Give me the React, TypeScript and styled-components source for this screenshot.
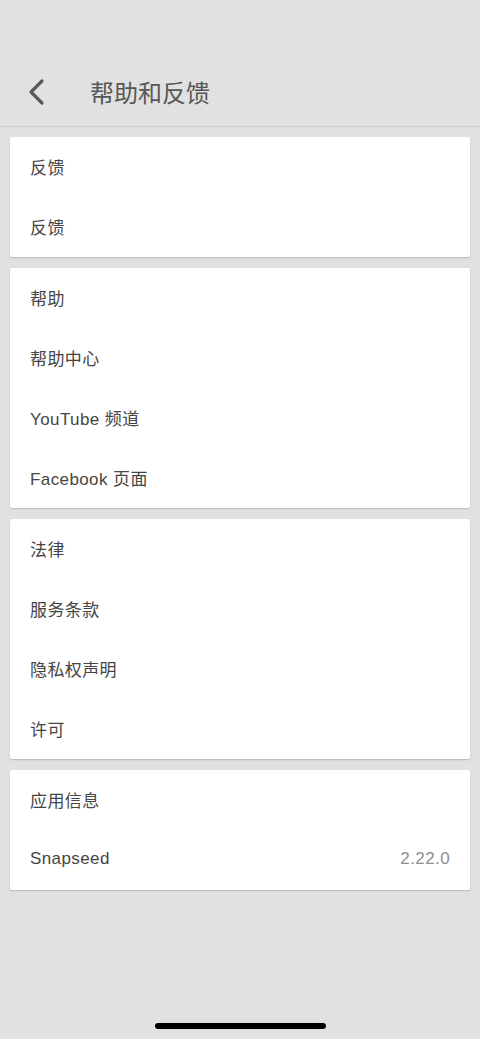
import React from "react";
import styled, { createGlobalStyle } from "styled-components";

const Global = createGlobalStyle`
  html, body { margin: 0; padding: 0; background: #e1e1e1; }
  body { font-family: "Liberation Sans", "Noto Sans CJK SC", sans-serif; }
`;

const Page = styled.div`
  width: 480px;
  height: 1039px;
  background: #e1e1e1;
  display: flex;
  flex-direction: column;
  position: relative;
  overflow: hidden;
`;

const Header = styled.header`
  height: 127px;
  box-sizing: border-box;
  border-bottom: 1px solid #cdcdcd;
  display: flex;
  align-items: flex-end;
  padding: 0 0 17px 24px;
`;

const BackButton = styled.button`
  width: 24px;
  height: 30px;
  border: none;
  background: none;
  padding: 0;
  display: flex;
  align-items: center;
  justify-content: center;
  margin-right: 42px;
  margin-bottom: 2px;
`;

const Title = styled.h1`
  margin: 0;
  font-size: 24px;
  font-weight: 400;
  color: #575757;
  line-height: 34px;
  font-family: "Noto Sans CJK SC", sans-serif;
`;

const List = styled.main`
  display: flex;
  flex-direction: column;
  gap: 11px;
  padding: 10px 10px 0;
`;

const Card = styled.section`
  background: #fff;
  border-radius: 2px;
  box-shadow: 0 1px 1.5px rgba(0, 0, 0, 0.18);
  display: flex;
  flex-direction: column;
`;

const Row = styled.div`
  height: 60px;
  display: flex;
  align-items: center;
  justify-content: space-between;
  padding: 0 20px 2px;
  box-sizing: border-box;
  font-size: 17px;
  letter-spacing: 0.4px;
  color: #454545;
`;

const Value = styled.span`
  color: #8e8e8e;
`;

const HomeIndicator = styled.div`
  position: absolute;
  left: 155px;
  bottom: 10px;
  width: 171px;
  height: 6px;
  border-radius: 3px;
  background: #000;
`;

type Item = { label: string; value?: string };

const sections: Item[][] = [
  [{ label: "反馈" }, { label: "反馈" }],
  [
    { label: "帮助" },
    { label: "帮助中心" },
    { label: "YouTube 频道" },
    { label: "Facebook 页面" },
  ],
  [
    { label: "法律" },
    { label: "服务条款" },
    { label: "隐私权声明" },
    { label: "许可" },
  ],
  [{ label: "应用信息" }, { label: "Snapseed", value: "2.22.0" }],
];

export default function App() {
  return (
    <Page>
      <Global />
      <Header>
        <BackButton aria-label="返回">
          <svg width="20" height="30" viewBox="0 0 20 30">
            <path
              d="M16 4 L5 15 L16 26"
              fill="none"
              stroke="#5a5a5a"
              strokeWidth="3.2"
              strokeLinecap="round"
              strokeLinejoin="round"
            />
          </svg>
        </BackButton>
        <Title>帮助和反馈</Title>
      </Header>
      <List>
        {sections.map((items, i) => (
          <Card key={i}>
            {items.map((it, j) => (
              <Row key={j}>
                <span>{it.label}</span>
                {it.value && <Value>{it.value}</Value>}
              </Row>
            ))}
          </Card>
        ))}
      </List>
      <HomeIndicator />
    </Page>
  );
}
